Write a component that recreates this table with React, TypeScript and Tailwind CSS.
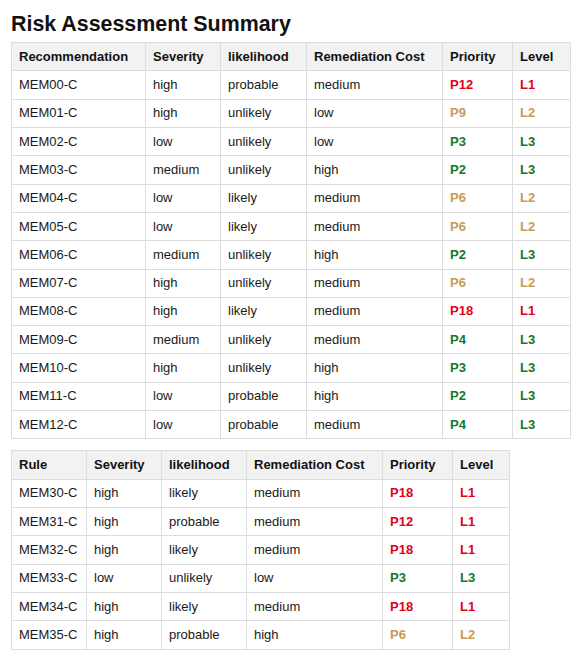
import React from "react";

type Row = [string, string, string, string, string, string];

const t1: Row[] = [
  ["MEM00-C", "high", "probable", "medium", "P12", "L1"],
  ["MEM01-C", "high", "unlikely", "low", "P9", "L2"],
  ["MEM02-C", "low", "unlikely", "low", "P3", "L3"],
  ["MEM03-C", "medium", "unlikely", "high", "P2", "L3"],
  ["MEM04-C", "low", "likely", "medium", "P6", "L2"],
  ["MEM05-C", "low", "likely", "medium", "P6", "L2"],
  ["MEM06-C", "medium", "unlikely", "high", "P2", "L3"],
  ["MEM07-C", "high", "unlikely", "medium", "P6", "L2"],
  ["MEM08-C", "high", "likely", "medium", "P18", "L1"],
  ["MEM09-C", "medium", "unlikely", "medium", "P4", "L3"],
  ["MEM10-C", "high", "unlikely", "high", "P3", "L3"],
  ["MEM11-C", "low", "probable", "high", "P2", "L3"],
  ["MEM12-C", "low", "probable", "medium", "P4", "L3"],
];

const t2: Row[] = [
  ["MEM30-C", "high", "likely", "medium", "P18", "L1"],
  ["MEM31-C", "high", "probable", "medium", "P12", "L1"],
  ["MEM32-C", "high", "likely", "medium", "P18", "L1"],
  ["MEM33-C", "low", "unlikely", "low", "P3", "L3"],
  ["MEM34-C", "high", "likely", "medium", "P18", "L1"],
  ["MEM35-C", "high", "probable", "high", "P6", "L2"],
];

function levelColor(l: string) {
  if (l === "L1") return "text-[#e2001a]";
  if (l === "L2") return "text-[#c99b52]";
  return "text-[#13782b]";
}

const cell =
  "border border-[#dddddd] px-[7px] py-[5.67px] leading-[16px] text-left align-middle whitespace-nowrap overflow-hidden";

function Table({
  first,
  rows,
  widths,
  total,
}: {
  first: string;
  rows: Row[];
  widths: number[];
  total: number;
}) {
  const heads = [first, "Severity", "likelihood", "Remediation Cost", "Priority", "Level"];
  return (
    <table className="border-collapse table-fixed" style={{ width: total }}>
      <colgroup>
        {widths.map((w, i) => (
          <col key={i} style={{ width: w }} />
        ))}
      </colgroup>
      <thead>
        <tr className="bg-[#f2f2f2]">
          {heads.map((h) => (
            <th key={h} className={`${cell} font-bold text-[#111]`}>
              {h}
            </th>
          ))}
        </tr>
      </thead>
      <tbody>
        {rows.map((r) => (
          <tr key={r[0]}>
            <td className={cell}>{r[0]}</td>
            <td className={cell}>{r[1]}</td>
            <td className={cell}>{r[2]}</td>
            <td className={cell}>{r[3]}</td>
            <td className={`${cell} font-bold ${levelColor(r[5])}`}>{r[4]}</td>
            <td className={`${cell} font-bold ${levelColor(r[5])}`}>{r[5]}</td>
          </tr>
        ))}
      </tbody>
    </table>
  );
}

export default function App() {
  return (
    <div
      className="bg-white text-[13px] text-[#1a1a1a] pl-[11px] pt-[11px]"
      style={{ fontFamily: '"Liberation Sans", Arial, sans-serif', minHeight: 658 }}
    >
      <h1 className="text-[21.4px] font-bold leading-[26px] text-[#111] mb-[5px]">
        Risk Assessment Summary
      </h1>
      <Table
        first="Recommendation"
        rows={t1}
        widths={[134, 75, 86, 136, 70, 58]}
        total={559}
      />
      <div className="h-[11px]" />
      <Table
        first="Rule"
        rows={t2}
        widths={[75, 75, 85, 136, 70, 57]}
        total={498}
      />
    </div>
  );
}
